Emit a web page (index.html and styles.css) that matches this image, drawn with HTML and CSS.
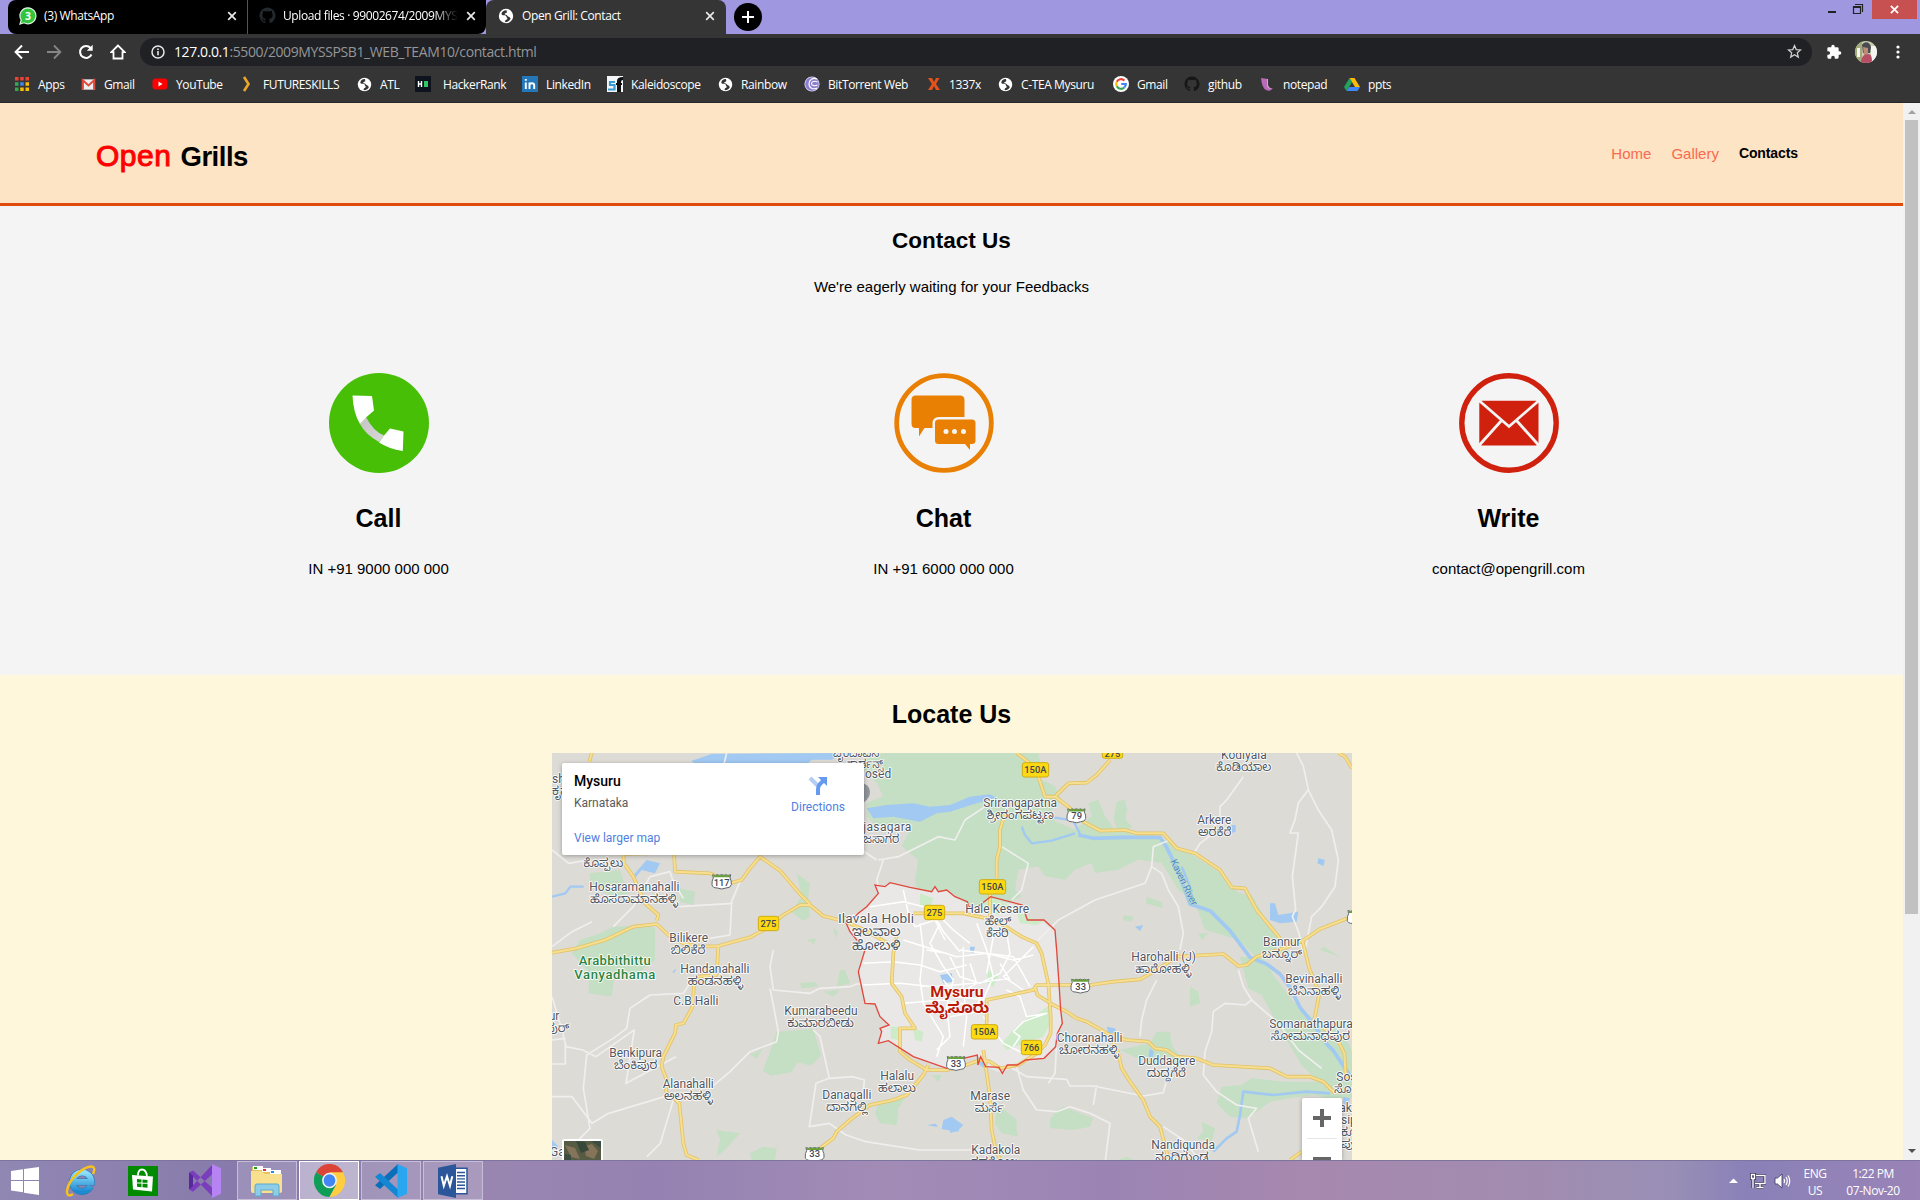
FILE: index.html
```html
<!DOCTYPE html>
<html lang="en">
<head>
<meta charset="utf-8">
<title>Open Grill: Contact</title>
<link rel="stylesheet" href="styles.css">
</head>
<body>
<svg class="defs" aria-hidden="true">
  <symbol id="globe" viewBox="0 0 16 16"><circle cx="8" cy="8" r="7.200" fill="#fff"/><path d="M8.600 2.200C6 2 4.200 3.400 3.600 5.200 3.300 6.600 4.400 7.300 6 7.300c1.600 0 2.200.5 2.400 1.500.1.800.9 1 1 1.700 0 .9-1.300 1.200-2 1.800-.5.500-.4 1.300 0 1.900 2.300-.2 4.300-1.500 5.200-3.400-.5-1.700-1.500-2-2.500-2.400-.8-.5-1-1.500-2-1.600-1-.1-1.600-.3-1.300-1.100.4-.9 1.600-.4 2-1.200.3-.7-.4-1.300-.2-2.300z" fill="#353535"/></symbol>
  <symbol id="cat" viewBox="0 0 16 16"><path d="M8 .4C3.800.4.500 3.800.5 8c0 3.300 2.100 6.100 5.100 7.100.4.100.5-.2.500-.4v-1.400c-2.100.5-2.500-.9-2.500-.9-.4-.9-.9-1.200-.9-1.200-.7-.4.100-.4.100-.4.700.1 1.100.800 1.100.800.700 1.200 1.800.8 2.200.6.100-.5.300-.8.500-1-1.700-.2-3.400-.8-3.400-3.700 0-.8.300-1.500.8-2-.1-.2-.4-1 .1-2 0 0 .6-.2 2 .8.600-.2 1.300-.3 1.900-.3s1.300.1 1.900.3c1.400-1 2-.8 2-.8.500 1 .2 1.800.1 2 .5.500.8 1.200.8 2 0 2.900-1.800 3.500-3.400 3.700.3.200.5.700.5 1.400v2.100c0 .2.100.5.500.4 3-1 5.100-3.800 5.100-7.100C15.500 3.800 12.200.4 8 .4z" fill="currentColor"/></symbol>
  <symbol id="shut" viewBox="0 0 10 10"><path d="M1.200 1.200l7.600 7.600M8.800 1.200L1.200 8.800" stroke="#e8e8e8" stroke-width="1.700"/></symbol>
</svg>

<header class="chrome">
  <div class="tabstrip">
    <div class="tab tab-dark tab-first">
      <svg width="18" height="18" viewBox="0 0 18 18"><path d="M9 .8a8 8 0 1 1-4 15L1 17l1.200-4A8 8 0 0 1 9 .8z" fill="#31c43c" stroke="#d8f5da" stroke-width="1.200"/><text x="9" y="12.800" text-anchor="middle" font-size="10.500" font-weight="700" fill="#fff">3</text></svg>
      <span class="tab-title">(3) WhatsApp</span><svg class="x" width="10" height="10"><use href="#shut"/></svg>
    </div>
    <div class="tab tab-dark tab-second">
      <svg class="dim" width="17" height="17"><use href="#cat"/></svg>
      <span class="tab-title fade">Upload files · 99002674/2009MYSS</span><svg class="x" width="10" height="10"><use href="#shut"/></svg>
    </div>
    <div class="tab tab-on">
      <svg width="16" height="16"><use href="#globe"/></svg>
      <span class="tab-title">Open Grill: Contact</span><svg class="x" width="10" height="10"><use href="#shut"/></svg>
    </div>
    <div class="newtab"><svg width="12" height="12" viewBox="0 0 12 12"><path d="M6 0v12M0 6h12" stroke="#fff" stroke-width="2"/></svg></div>
    <div class="winctl">
      <svg width="44" height="20" viewBox="0 0 44 20"><path d="M4 11h8v2H4z" fill="#222"/><path d="M29.500 6.500h7v7h-7zM31 4.500h7.500V12" fill="none" stroke="#222" stroke-width="1.200"/><path d="M29 6h8v2h-8z" fill="#222"/></svg>
      <div class="close"><svg width="9" height="9" viewBox="0 0 10 10"><path d="M1 1l8 8M9 1L1 9" stroke="#fff" stroke-width="2"/></svg></div>
    </div>
  </div>

  <div class="toolbar">
    <svg width="16" height="16" viewBox="0 0 16 16"><path d="M15 8H2M8 1.500L1.600 8 8 14.500" fill="none" stroke="#fff" stroke-width="2"/></svg>
    <svg width="16" height="16" viewBox="0 0 16 16"><path d="M1 8h13M8 1.500L14.400 8 8 14.500" fill="none" stroke="#858585" stroke-width="1.800"/></svg>
    <svg width="16" height="16" viewBox="0 0 16 16"><path d="M13.500 10.500A6 6 0 1 1 12.600 4" fill="none" stroke="#fff" stroke-width="2"/><path d="M14.700.8v6H8.800z" fill="#fff"/></svg>
    <svg width="16" height="16" viewBox="0 0 16 16"><path d="M8 1.500L1.300 8.200h2.200v6.300h9V8.200h2.200z" fill="none" stroke="#fff" stroke-width="1.800"/></svg>
    <div class="omnibox">
      <svg width="14" height="14" viewBox="0 0 14 14"><circle cx="7" cy="7" r="6" fill="none" stroke="#e8e8e8" stroke-width="1.500"/><path d="M7 6v4.300M7 3.500v1.500" stroke="#e8e8e8" stroke-width="1.600"/></svg>
      <span class="url"><b>127.0.0.1</b>:5500/2009MYSSPSB1_WEB_TEAM10/contact.html</span>
      <svg width="15" height="15" viewBox="0 0 24 24"><path d="M12 2.500l2.800 6.400 7 .6-5.300 4.600 1.600 6.900-6.100-3.700L5.900 21l1.600-6.900L2.200 9.500l7-.6z" fill="none" stroke="#d0d0d0" stroke-width="2"/></svg>
    </div>
    <svg width="16" height="16" viewBox="0 0 24 24"><path d="M20.500 11H19V7a2 2 0 0 0-2-2h-4V3.500a2.500 2.500 0 0 0-5 0V5H4a2 2 0 0 0-2 2v3.800h1.500a2.700 2.700 0 0 1 0 5.400H2V20a2 2 0 0 0 2 2h3.800v-1.500a2.700 2.700 0 0 1 5.400 0V22H17a2 2 0 0 0 2-2v-4h1.500a2.500 2.500 0 0 0 0-5z" fill="#fff"/></svg>
    <svg class="avatar" width="22" height="22" viewBox="0 0 22 22"><path fill="#c9cfae" d="M0 0h22v22H0z"/><path fill="#a3ab7a" d="M0 0h7v22H0z"/><path fill="#f4f4f2" d="M16 5h6v17h-6zM2 7h3v9H2z"/><path d="M7 4c2-4 8-4 9 2l-1 6H8z" fill="#4a4a52"/><path d="M8 6l5 1v6l-4 1z" fill="#c08a76"/><path d="M6 22c0-6 3-9 7-9s4 5 4 9z" fill="#b84e66"/></svg>
    <svg width="4" height="14" viewBox="0 0 4 14"><circle cx="2" cy="2" r="1.600" fill="#fff"/><circle cx="2" cy="7" r="1.600" fill="#fff"/><circle cx="2" cy="12" r="1.600" fill="#fff"/></svg>
  </div>

  <nav class="bookmarks">
    <a class="apps"><svg width="14" height="14" viewBox="0 0 14 14"><path fill="#ea4335" d="M0 0h3.500v3.500H0zM5.200 0h3.500v3.500H5.200zM10.500 0H14v3.500h-3.500z"/><path fill="#34a853" d="M0 5.200h3.500v3.500H0zM0 10.500h3.500V14H0z"/><path fill="#4285f4" d="M5.200 5.200h3.500v3.500H5.200z"/><path fill="#fbbc05" d="M10.500 5.200H14v3.500h-3.500zM10.500 10.500H14V14h-3.500zM5.200 10.500h3.500V14H5.200z"/></svg>Apps</a>
    <a><svg width="15" height="15" viewBox="0 0 16 16"><path fill="#eee" d="M1 2.500h14v11H1z"/><path d="M2 13.500v-10L8 9l6-5.500v10" fill="none" stroke="#dd4b3e" stroke-width="2.200"/></svg>Gmail</a>
    <a><svg width="16" height="16" viewBox="0 0 16 16"><rect x=".5" y="2.500" width="15" height="11" rx="3" fill="#f00"/><path d="M6.500 5.500v5L10.500 8z" fill="#fff"/></svg>YouTube</a>
    <a><svg width="13" height="16" viewBox="0 0 13 16"><path d="M2 1l4.500 7L2 15" fill="none" stroke="#eaa72b" stroke-width="2.600"/></svg>FUTURESKILLS</a>
    <a><svg width="15" height="15"><use href="#globe"/></svg>ATL</a>
    <a class="wide"><svg width="16" height="16" viewBox="0 0 16 16"><path fill="#0e141e" d="M0 0h16v16H0z"/><path d="M3.500 5v6M6.500 5v6M3.500 8h3" stroke="#fff" stroke-width="1.400"/><path fill="#2ec866" d="M9 5h4v6H9z"/></svg>HackerRank</a>
    <a><svg width="16" height="16" viewBox="0 0 16 16"><path fill="#2478ba" d="M0 0h16v16H0z"/><path d="M3.800 6.500V13M3.800 3v1.800M7.500 6.500V13M7.500 9.500c0-3 4.700-3 4.700 0V13" fill="none" stroke="#fff" stroke-width="1.900"/></svg>LinkedIn</a>
    <a><svg width="16" height="16" viewBox="0 0 16 16"><path fill="#f2f6f9" d="M0 0h16v16H0z"/><path d="M8 6H3v3h4.500v4.500H1" fill="none" stroke="#3a9bd0" stroke-width="2.200"/><path fill="#111" d="M10 16V5q0-4 6-4v3q-2 0-2 2v10z"/><path d="M9 8h6" stroke="#111" stroke-width="2"/></svg>Kaleidoscope</a>
    <a><svg width="15" height="15"><use href="#globe"/></svg>Rainbow</a>
    <a><svg width="16" height="16" viewBox="0 0 16 16"><circle cx="8" cy="8" r="7.600" fill="#d9d4f2"/><circle cx="8" cy="8" r="6.800" fill="#8d7fd0"/><path d="M13 3c-4-2-8 1-8 5s4 6 8 4M13.500 6c-3-1.500-6-.5-6 1.500s3 3 6 1.500" fill="none" stroke="#fff" stroke-width="1.100"/></svg>BitTorrent Web</a>
    <a><svg width="14" height="14" viewBox="0 0 14 14"><path d="M1 1h4l2 4 2-4h3.500L9 7l4 6H9L7 9l-2 4H1l4-6z" fill="#e6521c"/></svg>1337x</a>
    <a><svg width="15" height="15"><use href="#globe"/></svg>C-TEA Mysuru</a>
    <a><svg width="16" height="16" viewBox="0 0 16 16"><circle cx="8" cy="8" r="8" fill="#fff"/><g fill="none" stroke-width="2.200"><path d="M11.400 4.600A4.800 4.800 0 0 0 3.800 5.700" stroke="#ea4335"/><path d="M3.800 5.700a4.800 4.800 0 0 0 0 4.600" stroke="#fbbc05"/><path d="M3.800 10.300a4.800 4.800 0 0 0 7.500 1.200" stroke="#34a853"/><path d="M11.300 11.500A4.800 4.800 0 0 0 12.800 8H8.200" stroke="#4285f4"/></g></svg>Gmail</a>
    <a><svg class="catdark" width="16" height="16"><use href="#cat"/></svg>github</a>
    <a><svg width="16" height="16" viewBox="0 0 16 16"><path d="M2 2l7 1v6q1 4 5 3-3 4-7 2-4-2-5-12z" fill="#b86bb8"/><path d="M8 3l1 0v6q1 4 5 3-5 2-6-2z" fill="#d9a3d6"/></svg>notepad</a>
    <a><svg width="16" height="15" viewBox="0 0 16 15"><path d="M5.500 1h5L16 10h-5z" fill="#fbbc05"/><path d="M5.500 1L8 5.500 2.500 14 0 10z" fill="#21a35b"/><path d="M5.200 10H16l-2.500 4h-11z" fill="#4285f4"/></svg>ppts</a>
  </nav>
</header>

<div class="viewport">
  <div class="page">
    <header class="site">
      <h1><span>Open</span> Grills</h1>
      <nav><a>Home</a><a>Gallery</a><a class="current">Contacts</a></nav>
    </header>
    <section class="contact">
      <h2>Contact Us</h2>
      <p>We're eagerly waiting for your Feedbacks</p>
      <div class="ways">
        <div>
          <svg width="100" height="100" viewBox="0 0 100 100"><defs><linearGradient id="hs" x1="0" y1="0" x2="1" y2="1"><stop offset="0" stop-color="#c4c4c4"/><stop offset="1" stop-color="#d8d8d8"/></linearGradient></defs><circle cx="50" cy="50" r="50" fill="#46bf06"/><path d="M37 44Q44 58 55 62.500L50 69Q36 61 31 51z" fill="url(#hs)"/><path d="M23.500 22.500l19.500.5 2 14.500L37 44.500l-6 6.500Q24 39 23.500 22.500zM61 55.500l13.500 3-.7 19.500Q60 76 50 69.500l5-7z" fill="#fff"/></svg>
          <h3>Call</h3><p>IN +91 9000 000 000</p>
        </div>
        <div>
          <svg width="100" height="100" viewBox="0 0 100 100"><circle cx="50" cy="50" r="47.300" fill="none" stroke="#e98003" stroke-width="4.800"/><path d="M21.500 22.500h44.500q4.500 0 4.500 4.500v17H45q-6.500 0-6.500 6.500v4.500h-8L25 63.500V55h-3.500q-4 0-4-4.500V27q0-4.500 4-4.500z" fill="#e98003"/><path d="M44.500 46.500h33.500q3.500 0 3.500 3.500v17.500q0 3.500-3.500 3.500h-2v6l-5-6H44.500q-3.500 0-3.500-3.500V50q0-3.500 3.500-3.500z" fill="#e98003"/><circle cx="52" cy="58.500" r="2.500" fill="#f4f4f4"/><circle cx="60.500" cy="58.500" r="2.500" fill="#f4f4f4"/><circle cx="69.500" cy="58.500" r="2.500" fill="#f4f4f4"/></svg>
          <h3>Chat</h3><p>IN +91 6000 000 000</p>
        </div>
        <div>
          <svg width="100" height="100" viewBox="0 0 100 100"><circle cx="50" cy="50" r="47.200" fill="none" stroke="#d0210e" stroke-width="5.400"/><rect x="20.300" y="27.800" width="59.200" height="44.700" rx="3" fill="#d0210e"/><path d="M20 27.500L50 53.500 80 27.500M20 72.500l22.500-25M80 72.500l-22.500-25" fill="none" stroke="#f4f4f4" stroke-width="2.800"/></svg>
          <h3>Write</h3><p>contact@opengrill.com</p>
        </div>
      </div>
    </section>
    <section class="locate">
      <h2>Locate Us</h2>
      <div class="map">
        <svg class="tiles" width="800" height="407" viewBox="6 9 2400 1221">
          <path fill="#dddbd6" d="M0 0h2410v1235H0z"/>
          <g fill="#c4dfc3">
            <path d="M90 570l60-20 40-20 110-5 15 10v95l-50 40h-70l-10 70-70-10 5-60-55-60zM120 370l90-10 10 30 20 40-50 10-70-30zM390 415l45 10-5 40-40-10zM740 370l40 30-5 40 5 60-20 12-35-25 30-50zM850 535l15 10-8 20zM770 570l30-5-8 18zM940 9h260v230l-40 20-60-40-60 10h-60l-30-30v-40l50-20-20-40-40-40zM1160 250l40-20v90l-60 30-20-30z"/>
            <path d="M1200 9h265l10 50-20 20 60 30 20 40-30 30 10 35 60 25 50-40-10-40 30-10 20 50 30 40 90 10 60 20 90 50 90 60 40 50 40 5 70 120 50 65-100 10-60-60-100-30-30-80-50-40-50-80-70-10-60 30-70 10-10-30-50 20-30 30-60-10-20-30-60 10-10 60 20 20-60 30-30 50-60-10-60-30-100-30-10-60 10-60-50-40z"/>
            <path d="M1700 155l25-6 6 30-5 30 20 20-10 10h-35l-10-30zM1790 440l45 15 3 20-50-15zM1720 495l30 5-5 15-25-5zM1920 710l25 15 5 35-30 10zM1945 550l30 0-20 20zM2310 600l60 20-50-30z"/>
            <path d="M2070 620l70 5 30 50 60 80 60 50 60 20 50 60 20 90 60 0v60l-90 10-50 0-50-10-70 10-60 10-40 30-30 20-50-5-40-40 15-50 60-5 30-20 100 10 100 0-50-50-60-100-60-110-40-20z"/>
            <path d="M1710 900l90-20 20-35 40 0 5 40 30 40-20 20-80-5zM1500 1110l20-30 20-10 90 35-10 25-50 10-70-5zM1340 1060l60 50 0 30 5 20-50-10-20-30zM1730 1220l20 10-45 0zM1955 1115l40 20-10 40-45-10 20-20z"/>
            <path d="M680 845l110-8 15 50 8 30-30 30-40-10-20 30-60 10-25-15 20-50zM600 915l40-20-20 30zM750 700l45-5 10 15-50 5zM820 725l50-5-20 20zM870 660l15 0 15 40-40 10zM985 1060l80-15-20 30-5 50-50-5-15-30zM500 1140l70 10-45 50-25 20 10-50zM600 1210l40-20 40 5-5 35h-70zM1145 975l30 0-10 20z"/>
          </g>
          <path fill="#e9e8e6" d="M1215 440l-25-20-25 5-10-15-10 15-65-13-60-14-15 12-30-5 10 25-35 40-25 20-45 10 20 45 45 55-20 65 20 95 30 2 15 38 27 25-27 10 5 10-10 35 30-8 75 48 100 35 50-30 42-10 23 35 50 20 45-25 80-20 35-35 20-70-17-215-5-60-33-30h-50l-15-45-95-25-45 30z"/>
          <g fill="#cdebc9"><path d="M1395 835l40-35 30-10 40-30-5 60-20 40-60 20-50 20-15-20zM1022 830l22 0-2 40-20-5zM1090 835l30 10-5 30-20-5zM1110 430l40 15-10 30-30-10zM1315 660l30 20-15 30-20-10zM1275 465l60-20 50 25-40 25zM1400 485l50 20 30 10-20 10-50-5z"/></g>
          <g fill="#a1c9f1">
            <path d="M425 32l60-20 400-3-40 20h-60l-40 40H460zM255 370l35-40 40 10-15 30-40-10-25 30zM950 175l60-10 80-5 50 10 60-5 60-25 60-7 20 10-70 20-70 22-40 5-50 25-80-15-60 5z"/>
            <path d="M2160 460l15 0 10 35 60-10-5 30-50 5-30-10zM2305 325l20 5-5 18-18-8zM2045 225l12 0 0 20-12 5zM1755 530l25-5-10 18zM1260 590l15 0-5 20-10-5zM1170 675l35-5 5 25-30 5zM1285 920l15 10 4 25-15-10zM1200 1105l28 38-28 5zM1180 1110l25-10 35 25-20 20-45-8zM1130 1125l28-4 5 10zM1670 830l25 5 5 15-25 0zM1800 895l12 10-5 20-12-5zM380 655l-8 15-5-5zM6 1170l20 20-20 8zM2380 1040l20 5-5 25-15-10z"/>
          </g>
          <g fill="none" stroke="#a1c9f1" stroke-linejoin="round">
            <path d="M6 440l40-10 15-20 40 0M1415 230l10 25 20 25 60-8 70-22M1590 252l-20-40-60-10-60-3" stroke-width="7"/>
            <path d="M1585 255l45 10 90-3 110 0 20 30 30 60 40 110 60 20 60 60 60 80 50 20 40 30 30 40 30 60 40 50 40 60 20 20 60 90 50 50" stroke-width="11"/>
            <path d="M1895 350l25 60 10 60M2340 1030l-70-5-100 10-90-10-10 70-10 50-30 20-40 40" stroke-width="8"/>
          </g>
          <g fill="none" stroke="#f0efee" stroke-width="5" stroke-linejoin="round">
            <path d="M6 300l50 40 60-10M6 590l60-45 60-30M300 380l60-15 10 30 30 50M190 530l60-60 50-90M388 470l160-10M570 395l-25 60-5 100-60 10M670 600l-10 50 10 70 110 10 30-15 90-5 20-8h20M660 715l10 50 15 80-5 30-80 30-60 60-60 50M790 840l20 20 28 125-40 15-20 130 60-10 50 35 60 20 160 25h230M838 985l70-5 35 10-5 60M420 700l-20 30-100 5-60 40-10 60-40 30-80 50-10 100 20 120-60 60M6 740l30 100 12 50 50 10 40 20 100-70 15-10-25 160 150-80M6 1040l60 0 60 80 50-30 200-60-45 150-40 40M6 942h40v-60"/>
            <path d="M530 9l-10 40 30 40M980 330l-60-40-60-60M1000 330l-20 60 5 20M985 330l60-10 120-60 50 10 30-60 60-40M1355 290l40 25 40 25-20 80-30 30M2080 80l-50 70-20 20 0 30M1990 250l-40 30-15 25M2240 9l20 40 15 70-30 40-10 50-15 40 25 0-18 130 10 100-10 20 20 50 10 60M2275 120l30 60 40 60 20 90-10 80-40 60-30 30-20 100M1860 270l-50 20-5 60-20 50-150 50-110 60-60 60M1805 350l30 20 20 50 30 50 15 80-10 50M1820 690l-30 60-15 60-5 50M2065 660l15 50 25 40 -20 15-60-5-35 25-5 60-20 60-5 70 40 50 60 40 60 10-25 30 30 100M2105 750l80 70 60 80 70 55M1520 880l-5 90-20 30M1400 950l20 70 40 60 60 5 40-15 60 20 60 30-15 120M1380 950l50 30 120 8 10 20 70 0 150 30 60-10 8-30M1640 1005l-10 60M1840 1130l60 40 40 50M6 870l40-5"/>
          </g>
          <g fill="none" stroke="#fff" stroke-width="4.500" stroke-linejoin="round">
            <path d="M960 470l100-15 80 20 40 70 50 60M1060 420l15 70 20 40 60-20 30 60M940 640l90-5 80 10 60 20 80-20M940 705l110-5 100 10 120-10 110-15M1110 520l10 80-10 90 10 70 60 100-20 60M1170 520l-30 60 40 70 30 40-20 80 10 90-40 40M1060 570l160 50 90-10 80 20 60-15M1200 620l30 60 60 20 60-30 30-60-10-60M1240 590v130l10 80-10 90M1280 520l30 80 20 80-40 90M1330 560l-20 110M1060 760l120-10 100 20 20-50M1230 600l160 20 50 90M1180 690l40 50 90 10M1200 800l110-20M1150 480l60 60 50 40M1350 640l30 50M1450 590l-90 90 60 40M1130 600l60 10M1300 800l60 80 60 30 20-20M1390 845l30-30 70-25-60 10-20-60-40-20M1390 845l20 15-20 30M1260 640l20 60-50 30"/>
          </g>
          <g class="roads">
            <path id="hw" d="M6 608l74-13 85-25 85-40 70-8 35 33 45 25 50 10 55-2 95-26 50-27 50-40 50-30h30l40 33 60 15 60 25 70 40M780 462l-30-30-60-70-60-42-30 35-25 35-30 8-65-28-105-5-3-57-152 4 2 28 28 40 35 80 40 35-5 17M125 9l-7 26M505 588l-5 87-60 5-8 20-4 70-28 50-22 5-3 25-35 70-5 30 15 40-2 35 40 35 4 40 8 80 10 35 35 15M810 1195l40-30 10-20 40-35 60-45 70-15 40-15 50-60 15-30M1090 490h150l70 15 50 20 55 35 45 20 15 30 20 90 7 100v50l-17 35-25 25-55 35-55 10-30-20-30-5-55 20-45 10h-60l-50-30-30-25v-70h45l-30-45-10-50-30-40 5-90 10-50M1310 830v-80l140-30 10-15h160l70-10 80-7 50-28 60-40 140-8 45 36 25-3 30-25 90-28 48-20 52-35 95-37M2258 575l20 80 30 75-15 80 35 30 35 30 20 40 5 80M1400 9l40 31 25 40 20 60h30l40-40 55-2 30-23 40-45M1515 140l40 30 45 45 50 27 75-2 35 10h80l40 45 55 15 75 50 35 52 40 3 35 65 70 85M1365 190l-15 50v50l-10 40v55M1320 430v75M2365 9l20 11 21 35M1455 710l7 25 48 30 40 20 30 20 30 10 70 40 50 15 65 5 20 20 35 5 30 20 60 5 50 20 170 10 50 25h70l40 15 30 30h40M1680 855l25 55 10 45 25 40 40 55 20 50 30 30 25 95M1300 900l10 70 10 70 5 100 10 50 15 40M2255 1205l-35 25"/>
            <use href="#hw" class="core"/>
          </g>
          <path d="M1215 440l-25-20-25 5-10-15-10 15-65-13-60-14-15 12-30-5 10 25-35 40-25 20-10 10-35 0 20 45 45 55-20 65 20 95 30 2 15 38 27 25-27 10 5 10-10 35 30-8 75 48 100 35 50-30 42-10 2 30 8-25 15 30 40 2 10 18 15-25 30 0 25-15 55-5 35-35 5-40 15-30-5-40-5-80-7-100-5-60-33-30h-50l-15-45-95-25-45 35-20-5-5-15z" fill="none" stroke="#e1483c" stroke-width="4"/>

          <path d="M930 100a26 26 0 0 1 30 25q0 18-18 32h-12z" fill="#8f9499"/>
          <g class="lbl">
            <text x="945" y="84">osed</text><text x="6" y="100">shn</text>
            <text x="940" y="244" textLength="144">jasagara</text>
            <text x="118" y="424" textLength="270">Hosaramanahalli</text>
            <text x="358" y="577" textLength="116">Bilikere</text>
            <text x="391" y="670" textLength="207">Handanahalli</text>
            <text x="370" y="765" textLength="135">C.B.Halli</text>
            <text x="703" y="796" textLength="220">Kumarabeedu</text>
            <text x="178" y="922" textLength="158">Benkipura</text>
            <text x="338" y="1015" textLength="153">Alanahalli</text>
            <text x="991" y="990" textLength="101">Halalu</text>
            <text x="817" y="1047" textLength="147">Danagalli</text>
            <text x="-24" y="810">pur</text><text x="0" y="1218">Ga</text>
            <text x="1300" y="172" textLength="221">Srirangapatna</text>
            <text x="2013" y="28" textLength="137">Kodiyala</text>
            <text x="1942" y="223" textLength="102">Arkere</text>
            <text x="1246" y="490" textLength="191">Hale Kesare</text>
            <text x="1744" y="634" textLength="194">Harohalli (J)</text>
            <text x="2139" y="589" textLength="113">Bannur</text>
            <text x="2206" y="700" textLength="171">Bevinahalli</text>
            <text x="2158" y="835" textLength="250">Somanathapura</text>
            <text x="1520" y="877" textLength="197">Choranahalli</text>
            <text x="1765" y="946" textLength="171">Duddagere</text>
            <text x="1261" y="1051" textLength="119">Marase</text>
            <text x="1264" y="1213" textLength="147">Kadakola</text>
            <text x="1804" y="1198" textLength="191">Nandigunda</text>
            <text x="2359" y="994">Sosale</text><text x="2368" y="1086">aku</text><text x="2373" y="1122">sip</text>
            <text class="mid" x="864" y="518" textLength="228">Ilavala Hobli</text>
            <text class="park" x="86" y="645" textLength="216">Arabbithittu</text><text class="park" x="73" y="687" textLength="243">Vanyadhama</text>
            <text class="city" x="1141" y="742" textLength="160" lengthAdjust="spacingAndGlyphs">Mysuru</text>
            <text class="river" textLength="150" transform="translate(1860 334) rotate(64)">Kaveri River</text>
          </g>
          <g class="lbl kn" lang="kn">
            <text x="848" y="20" textLength="140" lengthAdjust="spacingAndGlyphs">ಬೃಂದಾವನ</text>
            <text x="890" y="53" textLength="110" lengthAdjust="spacingAndGlyphs">ಗಾರ್ಡನ್ಸ್</text>
            <text x="6" y="136">ಕೃಷ್ಣ</text>
            <text x="940" y="280" textLength="108" lengthAdjust="spacingAndGlyphs">ಜಸಾಗರ</text>
            <text x="100" y="352" textLength="120" lengthAdjust="spacingAndGlyphs">ಕೊಪ್ಪಲು</text>
            <text x="120" y="459" textLength="264" lengthAdjust="spacingAndGlyphs">ಹೊಸರಾಮಾನಹಳ್ಳಿ</text>
            <text x="362" y="613" textLength="104" lengthAdjust="spacingAndGlyphs">ಬಿಲಿಕೆರೆ</text>
            <text x="413" y="706" textLength="166" lengthAdjust="spacingAndGlyphs">ಹಂಡನಹಳ್ಳಿ</text>
            <text x="712" y="831" textLength="200" lengthAdjust="spacingAndGlyphs">ಕುಮಾರಬೀಡು</text>
            <text x="192" y="957" textLength="130" lengthAdjust="spacingAndGlyphs">ಬೆಂಕಿಪುರ</text>
            <text x="342" y="1051" textLength="146" lengthAdjust="spacingAndGlyphs">ಅಲನಹಳ್ಳಿ</text>
            <text x="984" y="1025" textLength="114" lengthAdjust="spacingAndGlyphs">ಹಲಾಲು</text>
            <text x="828" y="1083" textLength="124" lengthAdjust="spacingAndGlyphs">ದಾನಗಲ್ಲಿ</text>
            <text x="-14" y="846">ಪುರ್</text>
            <text x="1310" y="207" textLength="202" lengthAdjust="spacingAndGlyphs">ಶ್ರೀರಂಗಪಟ್ಟಣ</text>
            <text x="1998" y="63" textLength="166" lengthAdjust="spacingAndGlyphs">ಕೊಡಿಯಾಲ</text>
            <text x="1944" y="258" textLength="100" lengthAdjust="spacingAndGlyphs">ಅರಕೆರೆ</text>
            <text x="1304" y="525" textLength="80" lengthAdjust="spacingAndGlyphs">ಹೇಲ್</text>
            <text x="1308" y="561" textLength="68" lengthAdjust="spacingAndGlyphs">ಕೆಸರಿ</text>
            <text x="1756" y="669" textLength="168" lengthAdjust="spacingAndGlyphs">ಹಾರೋಹಳ್ಳಿ</text>
            <text x="2136" y="624" textLength="120" lengthAdjust="spacingAndGlyphs">ಬನ್ನೂರ್</text>
            <text x="2214" y="736" textLength="158" lengthAdjust="spacingAndGlyphs">ಬೆನಿನಾಹಳ್ಳಿ</text>
            <text x="2162" y="871" textLength="238" lengthAdjust="spacingAndGlyphs">ಸೋಮನಾಥಪುರ</text>
            <text x="1527" y="913" textLength="180" lengthAdjust="spacingAndGlyphs">ಚೋರನಹಳ್ಳಿ</text>
            <text x="1790" y="981" textLength="118" lengthAdjust="spacingAndGlyphs">ದುದ್ದಗೆರೆ</text>
            <text x="1274" y="1087" textLength="88" lengthAdjust="spacingAndGlyphs">ಮರ್ಸೆ</text>
            <text x="1264" y="1249" textLength="142" lengthAdjust="spacingAndGlyphs">ಕಡಕೋಲ</text>
            <text x="1816" y="1234" textLength="160" lengthAdjust="spacingAndGlyphs">ನಂದಿಗುಂಡ</text>
            <text x="2352" y="1029">ಸೋಸಲೆ</text><text x="2373" y="1158">ಕೂ</text><text x="2373" y="1194">ಪು</text>
            <text class="mid" x="906" y="559" textLength="146" lengthAdjust="spacingAndGlyphs">ಇಲವಾಲ</text>
            <text class="mid" x="906" y="600" textLength="146" lengthAdjust="spacingAndGlyphs">ಹೋಬಳಿ</text>
            <text class="city" x="1126" y="788" textLength="192" lengthAdjust="spacingAndGlyphs">ಮೈಸೂರು</text>
          </g>
          <g class="shield">
            <rect x="625" y="499" width="61" height="43" rx="7"/><text x="655" y="531">275</text>
            <rect x="1123" y="466" width="61" height="43" rx="7"/><text x="1153" y="499">275</text>
            <rect x="1417" y="38" width="79" height="43" rx="7"/><text x="1456" y="70">150A</text>
            <rect x="1657" y="-18" width="61" height="43" rx="7"/><text x="1687" y="20">275</text>
            <rect x="1288" y="389" width="79" height="43" rx="7"/><text x="1327" y="421">150A</text>
            <rect x="1264" y="824" width="79" height="43" rx="7"/><text x="1303" y="856">150A</text>
            <rect x="1414" y="871" width="61" height="43" rx="7"/><text x="1444" y="903">766</text>
          </g>
          <symbol id="nh" viewBox="0 0 62 48" overflow="visible"><path d="M4 5q9 5 14 0 5 4 13 0 8 4 13 0 5 5 14 0l-2 10q5 8 4 20-2 10-16 10l-13 3-13-3Q3 45 2 35q-1-12 4-20z" fill="#fff" stroke="#5c636b" stroke-width="3"/><path d="M6 5q7 4 12 0 5 4 13 0 8 4 13 0 5 4 12 0v8H7z" fill="#689f38"/></symbol>
          <g class="nh">
            <use href="#nh" x="484" y="369" width="62" height="48"/><text x="515" y="407">117</text>
            <use href="#nh" x="1549" y="171" width="60" height="48"/><text x="1580" y="208">79</text>
            <use href="#nh" x="1561" y="682" width="60" height="48"/><text x="1592" y="719">33</text>
            <use href="#nh" x="1188" y="914" width="60" height="48"/><text x="1218" y="950">33</text>
            <use href="#nh" x="764" y="1187" width="60" height="48"/><text x="794" y="1222">33</text>
            <use href="#nh" x="2390" y="476" width="60" height="48"/>
          </g>
        </svg>
        <div class="card">
          <div class="place"><strong>Mysuru</strong><span>Karnataka</span><a>View larger map</a></div>
          <div class="directions"><svg width="20" height="20" viewBox="0 0 20 20"><path d="M2 2l8 8" stroke="#b3cdf6" stroke-width="4"/><path d="M10 19v-6q0-3 2-5l3-3" fill="none" stroke="#659af0" stroke-width="4"/><path d="M10 1h9v9z" fill="#659af0"/></svg>Directions</div>
        </div>
        <svg class="sat" width="41" height="21" viewBox="0 0 41 21"><path d="M0 2q0-2 2-2h37q2 0 2 2v19H0z" fill="#fff"/><path d="M2 2h37v19H2z" fill="#565b44"/><path d="M3 6l10 3 5 11-9-2zM22 7l8-2 6 7-4 8-8-3z" fill="#85735a"/><path d="M14 2l9 1 4 8-8 3z" fill="#37473a"/><path d="M29 2l10 0v7zM3 15l6 1v5H2z" fill="#3b4c40"/></svg>
        <div class="zoom"><svg width="40" height="62" viewBox="0 0 40 62"><path d="M11 18h18v4H11zM18 11h4v18h-4zM11 59h18v4H11z" fill="#666"/><path d="M5 40.500h30" stroke="#e6e6e6"/></svg></div>
      </div>
    </section>
  </div>
  <div class="scroll"><i class="up"></i><div class="thumb"></div><i class="down"></i></div>
</div>

<footer class="taskbar">
  <div class="start"><svg width="28" height="28" viewBox="0 0 28 28"><path d="M0 4l12-1.700V13H0zM13 2.100L28 0v13H13zM0 14h12v11.200L0 23.500zM13 14h15v14l-15-2.300z" fill="#fff"/></svg></div>
  <div class="app"><svg width="32" height="32" viewBox="0 0 32 32"><defs><linearGradient id="ie" x1="0" y1="0" x2="0" y2="1"><stop offset="0" stop-color="#8fe0fb"/><stop offset="1" stop-color="#1d8ad0"/></linearGradient></defs><path d="M25.500 21A9.400 9.400 0 1 1 26.400 17H9" fill="none" stroke="#2a75b5" stroke-width="7"/><path d="M25.500 21A9.400 9.400 0 1 1 26.400 17H9" fill="none" stroke="url(#ie)" stroke-width="5.800"/><path d="M8 29C-1 35 0 20 12 9 22 0 33-2 28 9" fill="none" stroke="#f8c21b" stroke-width="2.400"/></svg></div>
  <div class="app"><svg width="30" height="30" viewBox="0 0 30 30"><path fill="#008a00" d="M0 0h30v30H0z"/><path d="M4 9l21 1.500-1 15-19-2z" fill="#fff"/><path d="M10 9.500q0-6 4-6t5 6.500" fill="none" stroke="#fff" stroke-width="1.800"/><path d="M9 13l4.500.4v3.200H9zM14.500 13.500l5 .4v2.800h-5zM9 17.600h4.500v3.600L9 20.800zM14.500 17.700h5v4l-5-.5z" fill="#008a00"/></svg></div>
  <div class="app"><svg width="32" height="34" viewBox="0 0 32 32" preserveAspectRatio="none"><path d="M0 8l4-2 20 17v8zM0 24l4 2L24 9V0z" fill="#7a3dbb"/><path d="M0 8l4 3v10l-4 3z" fill="#56289a"/><path d="M23 0l9 4v24l-9 4z" fill="#b683f3"/></svg></div>
  <div class="app open"><svg width="34" height="32" viewBox="0 0 34 32"><path d="M2 2h10v4h10l10 3v18H2z" fill="#e3c55c"/><path fill="#fff" d="M3 1h10v4H3zM12 3h9v4h-9zM20 5h11v4H20z"/><path fill="#1ba11b" d="M4 2h3v2H4z"/><path fill="#d33" d="M13 4h3v2h-3z"/><path fill="#2a8ae0" d="M21 6h3v2h-3z"/><path d="M1 6h10l4 3h17v17q0 2-2 2H3q-2 0-2-2z" fill="#f8e08e"/><path d="M5 31V21q0-2 2-2h20q2 0 2 2v10h-6v-6H11v6z" fill="#8dcde8" stroke="#5aa9d0"/></svg></div>
  <div class="app open active"><svg width="31" height="33" viewBox="0 0 32 32" preserveAspectRatio="none"><path d="M16 16L2.100 8A16 16 0 0 1 29.900 8z" fill="#db4437"/><path d="M16 16L2.100 8A16 16 0 0 0 16 32l7-12z" fill="#0f9d58"/><path d="M16 16l0-8h13.900A16 16 0 0 1 16 32l7-12z" fill="#ffcd40"/><circle cx="16" cy="16" r="7.600" fill="#f1f1f1"/><circle cx="16" cy="16" r="6" fill="#4285f4"/></svg></div>
  <div class="app open"><svg width="32" height="34" viewBox="0 0 32 32" preserveAspectRatio="none"><path d="M23 8L5 23.500 0 20 23 0z" fill="#0a6fb8"/><path d="M23 24L5 8.500 0 12l23 20z" fill="#1487d4"/><path d="M22.500 0L32 4v24l-9.500 4z" fill="#2aa6f0"/></svg></div>
  <div class="app open"><svg width="32" height="34" viewBox="0 0 32 32" preserveAspectRatio="none"><path d="M17 4h13v24H17z" fill="#fff" stroke="#2b579a" stroke-width="1.500"/><path d="M20 8h8M20 11h8M20 14h8M20 17h8M20 20h8M20 23h8" stroke="#2b579a" stroke-width="1.300"/><path d="M1 3.500L19 0v32L1 28.500z" fill="#2b579a"/><path d="M4.500 11.500l2.300 9 3.200-9 3 9 2.300-9" fill="none" stroke="#fff" stroke-width="2"/></svg></div>
  <div class="tray">
    <svg width="9" height="6" viewBox="0 0 9 6"><path d="M4.500.5L9 5H0z" fill="#fff"/></svg>
    <svg width="16" height="16" viewBox="0 0 16 16"><path d="M6 2.500h9v8H5M10 11v3M6.500 14.500h7M1.500 1.500h3v4h-3zM3 6v9" fill="none" stroke="#3b3558" stroke-width="3.200"/><path d="M6 2.500h9v8H5M10 11v3M6.500 14.500h7M1.500 1.500h3v4h-3zM3 6v9" fill="none" stroke="#fff" stroke-width="1.400"/></svg>
    <svg width="17" height="16" viewBox="0 0 17 16"><path d="M1 5h2.500L8 1v14l-4.500-4H1z" fill="#fff" stroke="#3b3558" stroke-width=".8"/><path d="M10 6q1 2 0 4M12 4q2.500 4 0 8M14 2.500q3.500 5.500 0 11" fill="none" stroke="#fff" stroke-width="1.200"/></svg>
    <div class="two lang"><span>ENG</span><span>US</span></div>
    <div class="two clock"><span>1:22 PM</span><span>07-Nov-20</span></div>
  </div>
</footer>
</body>
</html>
```

FILE: styles.css
```css
* { box-sizing: border-box; }
body { margin: 0; width: 1920px; height: 1200px; overflow: hidden; display: flex; flex-direction: column; font-family: "Liberation Sans", Arial, sans-serif; font-size: 15px; color: #000; }
svg { display: block; flex: none; }
h1, h2, h3, p { margin: 0; }
.defs { position: absolute; width: 0; height: 0; }

.chrome { flex: none; height: 103px; background: #353535; border-bottom: 1px solid #242628; font-family: "Open Sans", "Noto Sans", sans-serif; font-size: 12px; color: #fff; }
.tabstrip { display: flex; height: 34px; background: #9f97e0; padding-left: 8px; }
.tab { display: flex; align-items: center; height: 34px; padding: 0 11px 3px 11px; white-space: nowrap; }
.tab-title { flex: 1; margin-left: 7px; overflow: hidden; letter-spacing: -.38px; }
.tab-dark { background: #000; }
.tab-first { width: 240px; border-radius: 8px 0 0 8px; border-right: 1px solid #555; padding-right: 10px; }
.tab-second { width: 238px; border-radius: 0 0 8px 0; padding-right: 10px; }
.tab-second .x { margin-left: 8px; }
.fade { mask-image: linear-gradient(90deg, #000 86%, transparent); }
.dim { color: #24292e; }
.tab-on { width: 240px; background: #353535; border-radius: 8px 8px 0 0; padding-left: 12px; }
.tab-on .tab-title { margin-left: 8px; }
.tab .x { margin-top: 1px; }
.newtab { width: 28px; height: 28px; margin: 3px 0 0 8px; border-radius: 50%; background: #000; display: flex; align-items: center; justify-content: center; }
.winctl { margin-left: auto; display: flex; padding-right: 3px; }
.winctl > svg { margin-right: 4px; }
.close { width: 45px; height: 19px; background: #c75050; display: flex; align-items: center; justify-content: center; }

.toolbar { display: flex; align-items: center; height: 36px; gap: 16px; padding-left: 14px; }
.omnibox { display: flex; align-items: center; width: 1672px; height: 28px; margin: -1px 0 0 -2px; padding: 0 10px 0 11px; border-radius: 14px; background: #202124; }
.omnibox + svg { margin-left: -2px; }
.url { flex: 1; margin-left: 9px; font-size: 14px; color: #949698; letter-spacing: -.4px; }
.url b { font-weight: 400; color: #fff; }
.toolbar .avatar { border-radius: 50%; margin-left: -3px; }
.toolbar .avatar + svg { margin-left: 3px; }

.bookmarks { display: grid; height: 28px; padding-left: 14px; grid-template-columns: 67px 71px 90px 115px 58px 107px 85px 111px 86px 123px 71px 115px 71px 75px 85px 80px; align-items: center; letter-spacing: -.38px; white-space: nowrap; }
.bookmarks a { display: flex; align-items: center; gap: 8px; }
.bookmarks .apps { gap: 9px; padding-left: 1px; }
.bookmarks .wide { gap: 12px; }
.catdark { color: #171717; }

.viewport { display: flex; height: 1057px; flex: none; overflow: hidden; }
.page { width: 1903px; }
.site { display: flex; justify-content: space-between; height: 103px; padding: 0 105px 0 96px; background: #fde4c4; border-bottom: 3px solid #e14a0d; }
.site h1 { margin-top: 35px; font-size: 27.500px; line-height: 36px; letter-spacing: -.5px; }
.site h1 span { margin-right: 2px; font-size: 30px; font-weight: 400; letter-spacing: .5px; color: #f00; -webkit-text-stroke: 1px #f00; }
.site nav { display: flex; gap: 20px; margin-top: 42px; color: #f96a50; line-height: 17px; }
.site nav .current { color: #000; font-weight: 700; font-size: 14px; letter-spacing: -.1px; }

.contact { height: 469px; background: #f4f4f4; text-align: center; padding-top: 22px; }
.contact h2 { font-size: 22.5px; line-height: 26px; }
.contact > p { margin-top: 24px; line-height: 17px; }
.ways { display: grid; grid-template-columns: repeat(3, 565px); margin: 78px 0 0 96px; }
.ways > div > svg { margin: 0 auto; }
.ways h3 { margin-top: 31px; font-size: 25px; line-height: 29px; }
.ways p { margin-top: 27px; line-height: 17px; }

.locate { height: 485px; background: #fef7db; padding-top: 25px; }
.locate h2 { font-size: 25px; line-height: 28px; text-align: center; }
.map { position: relative; width: 800px; height: 407px; margin: 25px 0 0 552px; overflow: hidden; font-family: Roboto, sans-serif; }
.roads { fill: none; stroke: #e3c268; stroke-width: 11px; stroke-linejoin: round; }
.roads .core { stroke: #f6df8e; stroke-width: 6px; }
.lbl text { font-size: 36px; fill: #4f565f; stroke: #fff; stroke-width: 5px; stroke-linejoin: round; paint-order: stroke; }
.kn { font-family: "Noto Sans Kannada", "Lohit Kannada", sans-serif; }
.lbl .mid { font-size: 41px; }
.lbl .park { font-size: 39px; fill: #2c8541; font-weight: 500; }
.lbl .city { font-size: 45px; fill: #ba1a08; font-weight: 700; }
.lbl .river { font-size: 30px; fill: #4a86cf; stroke: #c4dfc3; stroke-width: 3px; }
.shield rect { fill: #fdd914; stroke: #cfac14; stroke-width: 3px; }
.shield text, .nh text { font-size: 28px; font-weight: 500; fill: #3f4650; text-anchor: middle; }
.card { position: absolute; left: 10px; top: 10px; width: 302px; height: 92px; padding: 8px 19px 0 12px; display: flex; justify-content: space-between; background: #fff; border-radius: 2px; box-shadow: 0 1px 4px rgba(0, 0, 0, .3); font-size: 12px; color: #5b5b5b; }
.place { display: flex; flex-direction: column; }
.place strong { font-size: 14px; font-weight: 500; line-height: 20px; color: #000; }
.place span { line-height: 16px; margin-top: 4px; }
.place a { margin-top: 19px; line-height: 16px; color: #5080e0; }
.directions { display: flex; flex-direction: column; align-items: center; padding-top: 5px; gap: 4px; line-height: 15px; color: #5080e0; }
.sat { position: absolute; left: 10px; bottom: 0; }
.zoom { position: absolute; left: 750px; top: 345px; width: 40px; height: 62px; background: #fff; border-radius: 2px 2px 0 0; box-shadow: 0 1px 4px rgba(0, 0, 0, .3); }

.scroll { width: 17px; display: flex; flex-direction: column; align-items: center; background: #f1f1f1; }
.scroll i { border: 4px solid transparent; width: 0; height: 0; }
.scroll .up { border-top: 0; border-bottom-color: #a3a3a3; margin: 7px 0 6px; }
.scroll .down { border-bottom: 0; border-top-color: #505050; margin: auto 0 7px; }
.thumb { width: 13px; height: 794px; background: #c1c1c1; }

.taskbar { flex: none; display: flex; height: 40px; border-top: 1px solid #7e74a0; background: linear-gradient(90deg, #9187b3 0, #8679aa 14%, #9986b0 25%, #9582b2 34%, #a28cb6 46%, #9b84b4 58%, #a788ae 68%, #a18caf 80%, #998fb6 87%, #8981b8 91%, #9a83b6 100%); color: #fff; font-family: "Open Sans", sans-serif; font-size: 12px; }
.start, .app { display: flex; align-items: center; justify-content: center; }
.start { width: 50px; }
.app { width: 62px; }
.open { width: 60px; margin: 0 1px; border: 1px solid #c6bdd6; background: rgba(255, 255, 255, .17); }
.active { background: rgba(255, 255, 255, .42); border-color: #fff; }
.tray { margin-left: auto; display: flex; align-items: center; padding-right: 17px; }
.tray svg + svg { margin-left: 12px; }
.tray svg + svg + svg { margin-left: 8px; }
.two { display: flex; flex-direction: column; align-items: center; line-height: 17px; letter-spacing: -.45px; padding-top: 2px; }
.lang { width: 32px; margin-left: 8px; }
.clock { width: 60px; margin-left: 12px; }
```
